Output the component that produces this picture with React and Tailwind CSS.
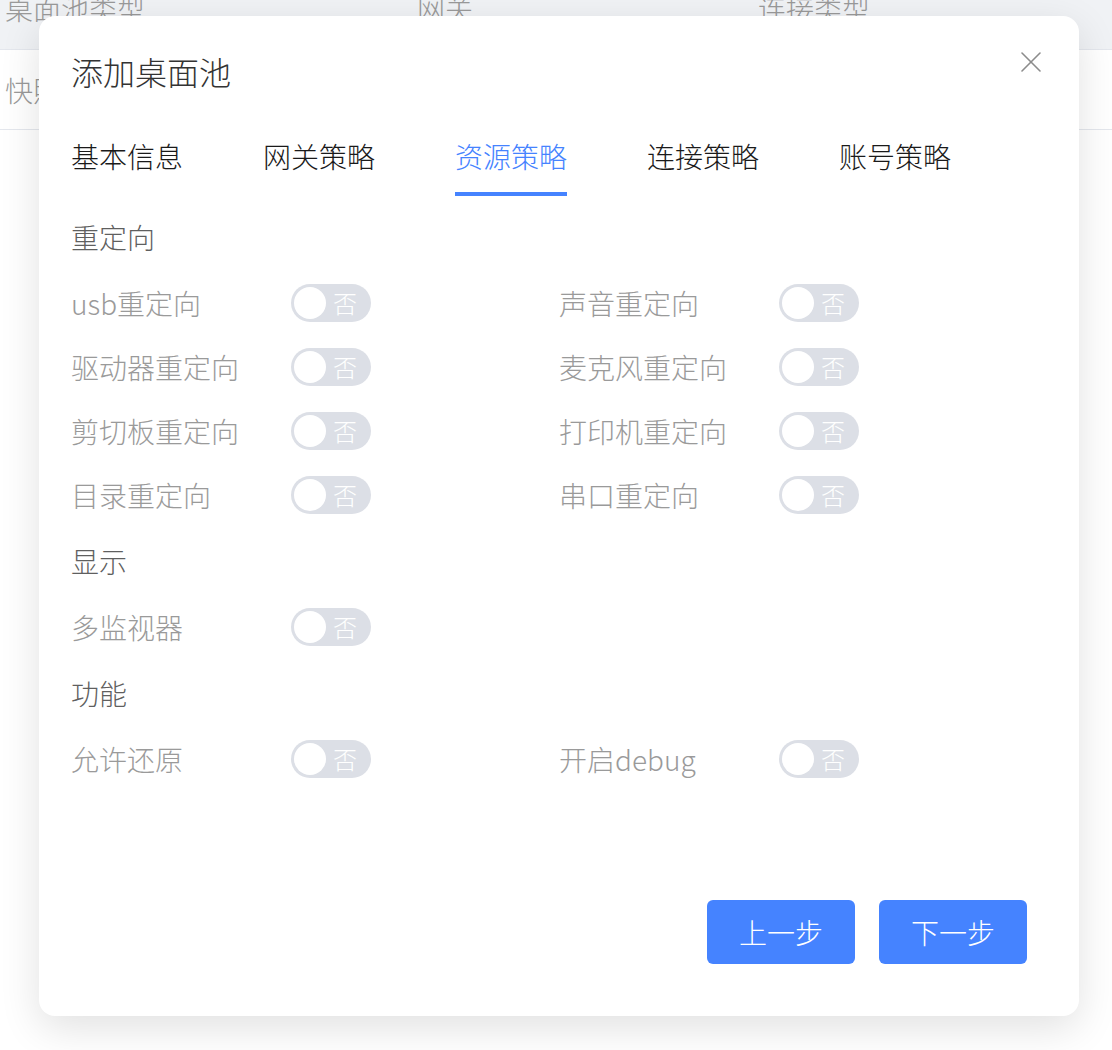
import React from 'react';

const font = { fontFamily: '"Noto Sans CJK SC", "Noto Sans", sans-serif' };

const Toggle = () => (
    <div className="relative w-[80px] h-[38px] rounded-full bg-[#dcdfe6] flex items-center">
        <div className="absolute left-[3px] top-[3px] w-[32px] h-[32px] rounded-full bg-white" />
        <span className="ml-[42px] text-[24px] leading-none text-white">否</span>
    </div>
);

const Field = ({ label }) => (
    <div className="flex items-center h-full">
        <span className="w-[220px] text-[28px] text-[#9a9a9a] leading-none">{label}</span>
        <Toggle />
    </div>
);

const Section = ({ title }) => (
    <div className="h-[68px] flex items-center text-[28px] text-[#5f5f5f] leading-none">{title}</div>
);

const Row = ({ left, right }) => (
    <div className="h-[64px] grid grid-cols-[488px_1fr]">
        {left ? <Field label={left} /> : <div />}
        {right ? <Field label={right} /> : <div />}
    </div>
);

const tabs = ['基本信息', '网关策略', '资源策略', '连接策略', '账号策略'];

export default function App() {
    return (
        <div className="relative w-[1112px] h-[1050px] bg-white overflow-hidden font-light" style={font}>
            {/* background table */}
            <div className="h-[50px] bg-[#f0f2f5] border-b border-[#e4e7ed] relative overflow-hidden">
                <div className="flex text-[28px] text-[#999] leading-[32px] -mt-[8px]">
                    <span className="pl-[5px] w-[417px]">桌面池类型</span>
                    <span className="w-[341px]">网关</span>
                    <span>连接类型</span>
                </div>
            </div>
            <div className="h-[80px] border-b border-[#e4e7ed] flex items-center">
                <span className="pl-[5px] text-[28px] text-[#999]">快照</span>
            </div>

            {/* dialog */}
            <div className="absolute left-[39px] top-[16px] w-[1040px] h-[1000px] bg-white rounded-[16px] shadow-[0_12px_40px_rgba(0,0,0,0.12)] flex flex-col px-[32px] pt-[38px] pb-[52px]">
                <button className="absolute right-[38px] top-[36px] w-[20px] h-[20px] text-[#8c8c8c]">
                    <svg viewBox="0 0 20 20" width="20" height="20" fill="none" stroke="currentColor" strokeWidth="1.6" strokeLinecap="round">
                        <line x1="1" y1="1" x2="19" y2="19" />
                        <line x1="19" y1="1" x2="1" y2="19" />
                    </svg>
                </button>

                <h2 className="text-[32px] leading-[34px] text-[#333] font-light">添加桌面池</h2>

                <div className="flex gap-[80px] mt-[48px]">
                    {tabs.map((t, i) => (
                        <div key={t} className="flex flex-col">
                            <span className={`text-[28px] leading-[40px] ${i === 2 ? 'text-[#4583ff]' : 'text-[#1a1a1a]'}`}>{t}</span>
                            <div className={`h-[4px] mt-[16px] ${i === 2 ? 'bg-[#4583ff]' : 'bg-transparent'}`} />
                        </div>
                    ))}
                </div>

                <div className="mt-[7px] flex flex-col">
                    <Section title="重定向" />
                    <Row left="usb重定向" right="声音重定向" />
                    <Row left="驱动器重定向" right="麦克风重定向" />
                    <Row left="剪切板重定向" right="打印机重定向" />
                    <Row left="目录重定向" right="串口重定向" />
                    <Section title="显示" />
                    <Row left="多监视器" />
                    <Section title="功能" />
                    <Row left="允许还原" right="开启debug" />
                </div>

                <div className="mt-auto flex justify-end gap-[24px] pr-[20px]">
                    <button className="w-[148px] h-[64px] rounded-[6px] bg-[#4583ff] text-white text-[28px]">上一步</button>
                    <button className="w-[148px] h-[64px] rounded-[6px] bg-[#4583ff] text-white text-[28px]">下一步</button>
                </div>
            </div>
        </div>
    );
}
